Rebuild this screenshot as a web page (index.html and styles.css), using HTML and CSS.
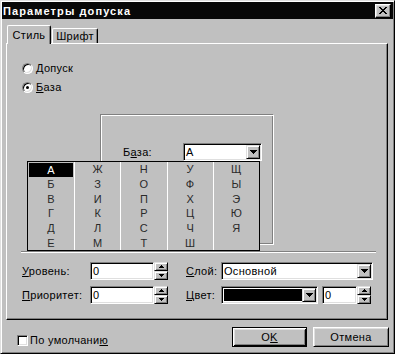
FILE: index.html
```html
<!DOCTYPE html>
<html lang="ru">
<head>
<meta charset="utf-8">
<title>Параметры допуска</title>
<link rel="stylesheet" href="styles.css">
</head>
<body>
<div class="window">
  <div class="titlebar">
    <span class="title">Параметры допуска</span>
    <span class="close"><svg width="8" height="7" viewBox="0 0 8 7" shape-rendering="crispEdges"><path d="M0 0h2v1h-2z M6 0h2v1h-2z M1 1h2v1h-2z M5 1h2v1h-2z M2 2h4v1h-4z M3 3h2v1h-2z M2 4h4v1h-4z M1 5h2v1h-2z M5 5h2v1h-2z M0 6h2v1h-2z M6 6h2v1h-2z" fill="#000"/></svg></span>
  </div>

  <div class="tabs">
    <div class="tab active">Стиль</div>
    <div class="tab">Шрифт</div>
  </div>

  <div class="panel">
    <div class="radios">
      <div class="radio-row"><span class="radio"></span><span class="rlabel"><u>Д</u>опуск</span></div>
      <div class="radio-row"><span class="radio checked"></span><span class="rlabel"><u>Б</u>аза</span></div>
    </div>

    <div class="group">
      <div class="grow">
        <span class="glabel">Б<u>а</u>за:</span>
        <span class="field combo base"><span class="ctext">А</span><span class="dbtn"><svg width="7" height="4" viewBox="0 0 7 4" shape-rendering="crispEdges"><path d="M0 0h7v1h-1v1h-1v1h-1v1h-1v-1h-1v-1h-1v-1h-1z" fill="#000"/></svg></span></span>
      </div>
    </div>

    <div class="separator"></div>

    <div class="form">
      <div class="frow">
        <span class="flabel"><u>У</u>ровень:</span>
        <span class="field edit lvl"><span class="ctext">0</span></span>
        <span class="spin">
          <span class="sbtn"><svg width="5" height="3" viewBox="0 0 5 3" shape-rendering="crispEdges"><path d="M2 0h1v1h1v1h1v1h-5v-1h1v-1h1z" fill="#000"/></svg></span>
          <span class="sbtn"><svg width="5" height="3" viewBox="0 0 5 3" shape-rendering="crispEdges"><path d="M0 0h5v1h-1v1h-1v1h-1v-1h-1v-1h-1z" fill="#000"/></svg></span>
        </span>
        <span class="flabel2"><u>С</u>лой:</span>
        <span class="field combo layer"><span class="ctext">Основной</span><span class="dbtn"><svg width="7" height="4" viewBox="0 0 7 4" shape-rendering="crispEdges"><path d="M0 0h7v1h-1v1h-1v1h-1v1h-1v-1h-1v-1h-1v-1h-1z" fill="#000"/></svg></span></span>
      </div>
      <div class="frow">
        <span class="flabel"><u>П</u>риоритет:</span>
        <span class="field edit lvl"><span class="ctext">0</span></span>
        <span class="spin">
          <span class="sbtn"><svg width="5" height="3" viewBox="0 0 5 3" shape-rendering="crispEdges"><path d="M2 0h1v1h1v1h1v1h-5v-1h1v-1h1z" fill="#000"/></svg></span>
          <span class="sbtn"><svg width="5" height="3" viewBox="0 0 5 3" shape-rendering="crispEdges"><path d="M0 0h5v1h-1v1h-1v1h-1v-1h-1v-1h-1z" fill="#000"/></svg></span>
        </span>
        <span class="flabel2"><u>Ц</u>вет:</span>
        <span class="field combo color"><span class="swatch"></span><span class="dbtn"><svg width="7" height="4" viewBox="0 0 7 4" shape-rendering="crispEdges"><path d="M0 0h7v1h-1v1h-1v1h-1v1h-1v-1h-1v-1h-1v-1h-1z" fill="#000"/></svg></span></span>
        <span class="field edit width"><span class="ctext">0</span></span>
        <span class="spin">
          <span class="sbtn"><svg width="5" height="3" viewBox="0 0 5 3" shape-rendering="crispEdges"><path d="M2 0h1v1h1v1h1v1h-5v-1h1v-1h1z" fill="#000"/></svg></span>
          <span class="sbtn"><svg width="5" height="3" viewBox="0 0 5 3" shape-rendering="crispEdges"><path d="M0 0h5v1h-1v1h-1v1h-1v-1h-1v-1h-1z" fill="#000"/></svg></span>
        </span>
      </div>
    </div>

    <div class="dlist">
      <div class="col"><span class="sel">А</span><span>Б</span><span>В</span><span>Г</span><span>Д</span><span>Е</span></div>
      <div class="col"><span>Ж</span><span>З</span><span>И</span><span>К</span><span>Л</span><span>М</span></div>
      <div class="col"><span>Н</span><span>О</span><span>П</span><span>Р</span><span>С</span><span>Т</span></div>
      <div class="col"><span>У</span><span>Ф</span><span>Х</span><span>Ц</span><span>Ч</span><span>Ш</span></div>
      <div class="col"><span>Щ</span><span>Ы</span><span>Э</span><span>Ю</span><span>Я</span><span></span></div>
    </div>
  </div>

  <div class="footer">
    <div class="check-row"><span class="checkbox"></span><span class="clabel">По умолчани<u>ю</u></span></div>
    <span class="btn default">O<u>K</u></span>
    <span class="btn">Отмена</span>
  </div>
</div>
</body>
</html>
```

FILE: styles.css
```css
* { box-sizing: border-box; }
html, body { margin: 0; padding: 0; }
body {
  width: 395px;
  height: 354px;
  overflow: hidden;
  background: #c0c0c0;
  font-family: "Liberation Sans", Arial, sans-serif;
  font-size: 11px;
  letter-spacing: 0.3px;
  color: #000;
}
u { text-decoration: underline; text-underline-offset: 1px; }

.window {
  width: 395px;
  height: 354px;
  background: #c0c0c0;
  border: 1px solid;
  border-color: #dfdfdf #000 #000 #dfdfdf;
  box-shadow: inset 1px 1px #fff, inset -1px -1px #808080;
  padding: 1px;
  display: flex;
  flex-direction: column;
}

.titlebar {
  height: 17px;
  background: #080808;
  display: flex;
  align-items: center;
  justify-content: space-between;
  padding: 0 2px 0 1px;
  flex: none;
}
.title {
  color: #fff;
  font-weight: bold;
  font-size: 11px;
  letter-spacing: 1.1px;
}
.close {
  width: 16px;
  height: 14px;
  background: #c0c0c0;
  border: 1px solid;
  border-color: #fff #000 #000 #fff;
  box-shadow: inset -1px -1px #808080, inset 1px 1px #dfdfdf;
  display: flex;
  align-items: center;
  justify-content: center;
}
.close svg { display: block; }

.tabs {
  height: 18px;
  margin: 6px 0 0 5px;
  display: flex;
  align-items: flex-end;
  flex: none;
}
.tab {
  height: 15px;
  width: 46px;
  margin-left: 1px;
  border-top: 1px solid #fff;
  border-left: 1px solid #fff;
  border-right: 1px solid #000;
  border-radius: 2px 2px 0 0;
  box-shadow: inset -1px 0 #808080;
  display: flex;
  align-items: center;
  justify-content: center;
  background: #c0c0c0;
}
.tab.active {
  width: 44px;
  height: 19px;
  margin-left: 0;
  margin-bottom: -1px;
  position: relative;
  z-index: 2;
  padding-bottom: 1px;
}

.panel {
  position: relative;
  margin-left: 4px;
  width: 382px;
  height: 277px;
  flex: none;
  border-top: 1px solid #fff;
  border-left: 1px solid #fff;
  border-right: 1px solid #000;
  border-bottom: 1px solid #000;
  box-shadow: inset -1px -1px #808080;
}

.radios {
  padding: 17px 0 0 15px;
  display: flex;
  flex-direction: column;
  gap: 5px;
}
.radio-row {
  height: 14px;
  display: flex;
  align-items: center;
  gap: 3px;
}
.radio {
  width: 11px;
  height: 11px;
  border-radius: 50%;
  background: #fff;
  border: 1px solid;
  border-color: #808080 #fff #fff #808080;
  box-shadow: inset 1px 1px #000, inset -1px -1px #dfdfdf;
  position: relative;
  flex: none;
}
.radio.checked::after {
  content: "";
  position: absolute;
  left: 3px;
  top: 3px;
  width: 3px;
  height: 3px;
  border-radius: 50%;
  background: #000;
}

.group {
  margin: 20px 0 0 93px;
  width: 174px;
  height: 131px;
  border: 1px solid;
  border-color: #808080 #fff #fff #808080;
  box-shadow: inset 1px 1px #fff, inset -1px -1px #808080;
  padding: 28px 0 0 22px;
}
.grow {
  display: flex;
  align-items: center;
  height: 18px;
}
.glabel { width: 60px; }

.field {
  height: 18px;
  background: #fff;
  border: 1px solid;
  border-color: #808080 #fff #fff #808080;
  box-shadow: inset 1px 1px #000, inset -1px -1px #dfdfdf;
  padding: 1px;
  display: flex;
  align-items: center;
  flex: none;
}
.ctext { padding-left: 1px; }
.dbtn {
  margin-left: auto;
  width: 14px;
  height: 14px;
  background: #c0c0c0;
  border: 1px solid;
  border-color: #dfdfdf #000 #000 #dfdfdf;
  box-shadow: inset 1px 1px #fff, inset -1px -1px #808080;
  display: flex;
  align-items: center;
  justify-content: center;
  flex: none;
}
.dbtn svg { display: block; }
.base { width: 79px; }
.layer { width: 152px; }
.lvl { width: 64px; }
.color { width: 97px; margin-right: 4px; }
.width { width: 35px; }
.swatch {
  width: 79px;
  height: 12px;
  margin-left: 1px;
  background: #000;
}

.separator {
  margin: 6px 0 0 14px;
  width: 355px;
  height: 2px;
  border-top: 1px solid #808080;
  border-bottom: 1px solid #fff;
}

.form {
  margin-top: 9px;
  padding-left: 15px;
  display: flex;
  flex-direction: column;
  gap: 6px;
}
.frow {
  display: flex;
  align-items: center;
  height: 18px;
}
.flabel { width: 68px; flex: none; }
.flabel2 { width: 35px; margin-left: 18px; flex: none; }

.spin {
  width: 14px;
  height: 18px;
  display: flex;
  flex-direction: column;
  flex: none;
}
.sbtn {
  height: 9px;
  background: #c0c0c0;
  border: 1px solid;
  border-color: #dfdfdf #000 #000 #dfdfdf;
  box-shadow: inset 1px 1px #fff, inset -1px -1px #808080;
  display: flex;
  align-items: center;
  justify-content: center;
}
.sbtn svg { display: block; }

.dlist {
  position: absolute;
  left: 20px;
  top: 117px;
  width: 233px;
  height: 90px;
  border: 1px solid #000;
  background: #c0c0c0;
  display: grid;
  grid-template-columns: repeat(5, 1fr);
  z-index: 3;
}
.col {
  display: grid;
  grid-template-rows: repeat(6, 1fr);
}
.col + .col { border-left: 1px solid #fff; }
.col span {
  display: flex;
  align-items: center;
  justify-content: center;
  color: #2a2a2a;
}
.col .sel {
  background: #000;
  color: #fff;
  margin: 1px 1px 0 1px;
}

.footer {
  height: 32px;
  flex: none;
  display: flex;
  align-items: flex-start;
  padding: 7px 4px 0 15px;
}
.check-row {
  margin-top: 6px;
  height: 14px;
  display: flex;
  align-items: center;
  gap: 2px;
}
.checkbox {
  width: 11px;
  height: 11px;
  background: #fff;
  border: 1px solid;
  border-color: #808080 #fff #fff #808080;
  box-shadow: inset 1px 1px #000, inset -1px -1px #dfdfdf;
  flex: none;
}
.btn {
  width: 76px;
  height: 20px;
  margin-left: 6px;
  background: #c0c0c0;
  border: 1px solid;
  border-color: #fff #000 #000 #fff;
  box-shadow: inset 1px 1px #dfdfdf, inset -1px -1px #808080;
  display: flex;
  align-items: center;
  justify-content: center;
  flex: none;
}
.btn.default {
  width: 75px;
  margin-left: auto;
  border-color: #000;
  box-shadow: inset 1px 1px #fff, inset -1px -1px #000, inset 2px 2px #dfdfdf, inset -2px -2px #808080;
}
```
